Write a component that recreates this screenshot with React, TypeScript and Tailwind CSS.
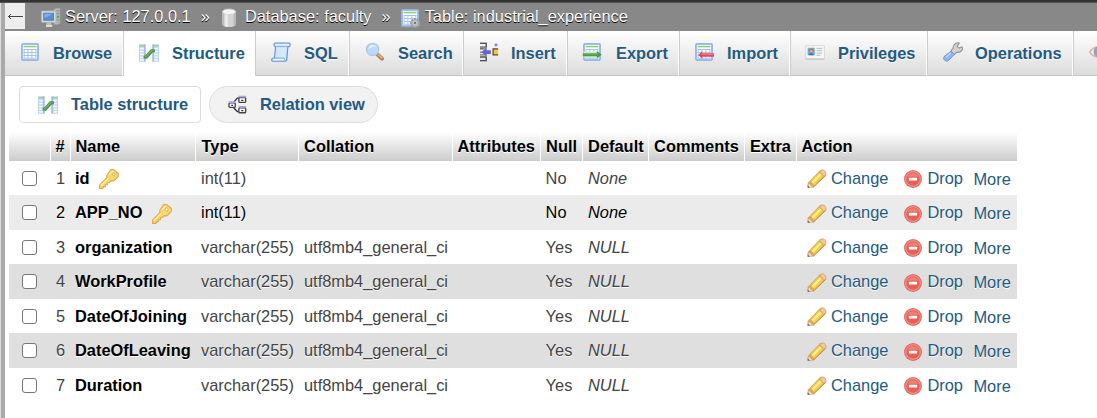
import React from "react";

type IconProps = { className?: string };

function Icon({ className = "", children }: IconProps & { children: React.ReactNode }) {
  return (
    <svg viewBox="0 0 16 16" width="20" height="20" className={`shrink-0 ${className}`} fill="none">
      {children}
    </svg>
  );
}

function Sheet() {
  return (
    <>
      <rect x="1" y="1" width="14" height="14" rx="1" fill="#a9c5ef" />
      <rect x="1.4" y="1.4" width="13.2" height="13.2" rx=".8" stroke="#8fb0e2" strokeWidth=".8" />
      <rect x="2.4" y="2.4" width="11.2" height="11.2" fill="#fff" />
      <rect x="2.8" y="3" width="10.4" height="1.3" fill="#8fcf82" />
      <path d="M2.8 6h10.4M2.8 8.4h10.4M2.8 10.8h10.4M2.8 13h10.4M3.3 6v7M6.3 6v7M9.5 6v7M12.7 6v7" stroke="#a3c3ee" strokeWidth=".8" />
    </>
  );
}

const BrowseIcon = () => <Icon><Sheet /></Icon>;

const StructureIcon = ({ className }: IconProps) => (
  <Icon className={className}>
    <rect x="0" y="1" width="5" height="14" fill="#bdd3f3" />
    <rect x="11" y="1" width="5" height="14" fill="#bdd3f3" />
    <path d="M.8 4.5h3M.8 6.8h3M.8 9.1h3M.8 11.4h3M.8 13.5h3M12.2 4.5h3M12.2 6.8h3M12.2 9.1h3M12.2 11.4h3M12.2 13.5h3" stroke="#f5f9ff" strokeWidth="1.3" />
    <path d="M.5 2.2h4M11.5 2.2h4" stroke="#a1d195" strokeWidth="1.2" />
    <path d="M4.8 1v14M11.2 1v14" stroke="#86a9dd" strokeWidth=".8" />
    <path d="M4.9 11.2h.9l4.5-5h1.2" stroke="#4f9447" strokeWidth="2.8" strokeLinejoin="round" strokeLinecap="round" />
    <path d="M4.7 10.8h.9l4.7-5h1.2" stroke="#70b467" strokeWidth="1" />
  </Icon>
);

const SqlIcon = () => (
  <Icon>
    <path d="M3.2.8h11.5c1 .3.8 2.8-.2 3l-1 .1-.8 9.5c0 1.3-.6 2-1.7 2H1.5c-1.5-.2-1.1-2.4.2-2.6h1.1l.8-9C2 3.4 2 1.1 3.2.8Z" fill="#c8e1fb" stroke="#6292d0" strokeWidth=".9" />
    <path d="M3.5 1.7h10.7v1.1H3.8zM2 13.6h8.3v1H1.8z" fill="#eef8ff" />
    <path d="m4.8 4.4-.7 8.2 7.4.2.7-8.6z" fill="#d2e8ff" />
    <path d="M3.8 3.5h9.5M2.8 12.8h7.5c.8 0 .8 1.8-.1 2" stroke="#79a3d9" strokeWidth=".7" />
  </Icon>
);

const SearchIcon = () => (
  <Icon>
    <path d="m10 10 3.7 3.4" stroke="#b98254" strokeWidth="3" strokeLinecap="round" />
    <path d="m10.4 9.9 3.3 3" stroke="#e5b779" strokeWidth="1.1" />
    <circle cx="6.1" cy="5.9" r="4.9" fill="#b9dafa" stroke="#b1c6e4" />
    <path d="M2.7 5.8c.3-2.3 2.2-3.7 4.3-3.3 1.6.3 2.5 1.3 2.5 1.3-2-.4-4.5.1-6.8 2Z" fill="#e5f5ff" />
  </Icon>
);

const InsertIcon = () => (
  <Icon>
    <path d="M0 1h5v3H0M0 4.8h5M0 12h5v3H0M0 8.1h4" stroke="#888" strokeWidth="1.2" />
    <path d="M0 1.1h5v3M0 12h5v2.8H0M0 5.6h3M0 10.3h5" stroke="#444" strokeWidth=".7" />
    <path d="m1.3 8 4-3.8v2.3h3.4v3H5.3v2.3Z" fill="#6961d4" />
    <rect x="10.5" y="5.6" width="4" height="4.5" fill="#ffc72c" />
    <path d="M14.5 5.5h-4v4.8h4" stroke="#484848" />
    <path d="m12.8.8 1.5 1.5-1.5 1.5-1.5-1.5Z" fill="#8882df" />
  </Icon>
);

const ExportIcon = () => (
  <Icon>
    <Sheet />
    <rect x="1.3" y="7.5" width="12.2" height="5" fill="#d1eccb" />
    <path d="M.7 8.9h11.2V7.2l3.9 2.9-3.9 2.9v-1.6H.7Z" fill="#4b9947" />
    <path d="M1 9.6h11.7" stroke="#82bd78" strokeWidth=".7" />
  </Icon>
);

const ImportIcon = () => (
  <Icon>
    <Sheet />
    <path d="m3.4 10.3 3.2-3v1.6H16v2.8H6.6v1.6Z" fill="#e94554" />
    <path d="M6 9.8h9.7" stroke="#ff8b8e" strokeWidth=".7" />
  </Icon>
);

const PrivilegesIcon = () => (
  <Icon>
    <rect x=".5" y="2.9" width="15" height="10.5" fill="#f7f7f5" stroke="#d9d9d8" strokeWidth=".8" />
    <path d="M.6 13.7h14.8" stroke="#b8b8b8" strokeWidth=".7" />
    <rect x="2.1" y="4.6" width="5.7" height="6" fill="#64adf1" />
    <circle cx="5" cy="6.9" r="1.7" fill="#c9762c" />
    <path d="M4.2 6.6h1.7v1.6H4.2z" fill="#f4bf85" />
    <path d="M3 10.6c.1-2.5 3.8-2.5 4 0Z" fill="#4274b6" />
    <path d="M9.2 5.1h4.5M9.2 7h4.5M9.2 8.9h4.5M9.2 10.6h3" stroke="#b5bac2" strokeWidth=".8" />
  </Icon>
);

const WrenchIcon = () => (
  <Icon>
    <path d="M6.7 8.1c-.6-1.5.2-2.2 1.3-3 .2-2.2 1.4-4.2 4-4.5l1 .3-1.7 2.5 1.5 1.5 2.4-1 .5 1.2c-.5 2.2-2.3 3.3-4.6 3.2L8.9 10Z" fill="#d0d1d3" stroke="#939599" strokeWidth=".9" />
    <path d="m6.4 7.4 2.6 2.6-4.6 4.8c-1.8 1.5-5-.9-3.6-3.1Z" fill="#91b4ef" stroke="#7198da" strokeWidth=".8" />
    <path d="m6 8.8-3.5 3.5" stroke="#cadcff" strokeWidth=".9" />
  </Icon>
);

const EyeIcon = () => (
  <Icon>
    <path d="M.7 8c3-5.3 11.6-5.3 14.6 0-3 5.3-11.6 5.3-14.6 0Z" fill="#fffaf4" stroke="#e0b992" strokeWidth="1.4" />
    <circle cx="8" cy="7.8" r="4" fill="#7ba9e5" stroke="#6b98da" strokeWidth=".7" />
    <circle cx="8" cy="7.8" r="1.5" fill="#17335f" />
  </Icon>
);

const RelationIcon = () => (
  <Icon>
    <path d="M4.5 6 7.4 2.5h1.3M4.5 10.2l2.9 3h1.3" stroke="#333" />
    <rect x=".8" y="6.3" width="5" height="3.6" rx=".7" fill="#fff" stroke="#444" strokeWidth="1.1" />
    <rect x="8.7" y="2" width="5.4" height="3.9" rx=".7" fill="#fff" stroke="#444" strokeWidth="1.1" />
    <rect x="8.7" y="10.3" width="5.4" height="3.9" rx=".7" fill="#fff" stroke="#444" strokeWidth="1.1" />
    <path d="M.6 5.6h5.4M8.5 1.3h6M8.5 9.5h6" stroke="#aaa1e6" strokeWidth="1.4" />
    <path d="M2.6 8.2h1.5M10.6 4.2h1.7M10.6 12.4h1.7" stroke="#333" strokeWidth="1" />
  </Icon>
);

const ServerIcon = () => (
  <Icon>
    <path d="M10 1.2 12 0h3.5v12.4l-2 1H10Z" fill="#b3b6b4" stroke="#8b8d8c" strokeWidth=".5" />
    <path d="M12.3 2.3h2.5M12.3 4.5h2.5M12.3 9.5h2.5" stroke="#858886" strokeWidth=".7" />
    <path d="M12.7 7h1.8" stroke="#2ab832" strokeWidth="1.5" />
    <rect x=".4" y="2.4" width="11.5" height="9" rx=".7" fill="#d8dbdb" stroke="#b2b5b7" strokeWidth=".7" />
    <rect x="2.2" y="4.1" width="7.9" height="5.7" fill="#5b8dd2" stroke="#4675b8" strokeWidth=".6" />
    <path d="M2.8 4.6h6.7L2.8 8Z" fill="#7dafea" />
    <path d="M4.6 11.5h3.2l.7 2H4Z" fill="#bdbfc0" />
    <path d="M4 14.4h5" stroke="#e0e0e0" strokeWidth="1.5" />
  </Icon>
);

const DatabaseIcon = () => (
  <Icon>
    <path d="M2.7 3v10c.2 3 10.4 3 10.6 0V3Z" fill="#d4d4d4" />
    <path d="M4 4v10c-.7-.2-1.2-.6-1.3-1V3ZM11.5 4v10.2c1-.3 1.7-.7 1.8-1.2V3Z" fill="#bcbcbc" />
    <path d="M5 4h2v11H5Z" fill="#eee" />
    <ellipse cx="8" cy="3" rx="5.3" ry="2.3" fill="#f4f4f4" stroke="#c6c6c6" strokeWidth=".5" />
  </Icon>
);

const TableIcon = () => (
  <Icon>
    <Sheet />
    <circle cx="12" cy="12" r="3.2" fill="#c5c7ca" stroke="#999b9e" strokeWidth="1.7" strokeDasharray="1.5 .8" />
    <circle cx="12" cy="12" r="2.5" fill="#c8cacc" stroke="#989a9d" strokeWidth=".5" />
    <circle cx="12" cy="12" r="1" fill="#777" />
  </Icon>
);

const KeyIcon = ({ className }: IconProps) => (
  <Icon className={className}>
    <path d="M9.1.9c.8-.7 2-.7 2.9-.2l3.1 2.5c.9.8.9 2 .2 2.9l-3 3c-.7.7-1.7.6-2.6.2L8 11H6.7v1.6H5.1v1.5H3.7L3 15.5H.5v-2.8l6-5.9c-.4-.8-.4-1.8.3-2.6Z" fill="#f8d966" stroke="#dba85a" strokeWidth=".9" />
    <path d="m8 4.3 2.5-2.5 1 .2M1.5 13.2l5.8-5.6" stroke="#fff1aa" strokeWidth=".9" />
    <circle cx="11.7" cy="4.3" r="1.2" fill="#fff" stroke="#d8a64d" strokeWidth=".7" />
  </Icon>
);

const PencilIcon = () => (
  <Icon>
    <path d="m.5 11.2 9.6-10c1.4-1.2 3.3-.9 4.5.3s1.3 2.9.2 4.1L5 14.8l-4.5.2Z" fill="#dda85f" />
    <path d="m1.5 11.5 2.6 2.6-3.5.8Z" fill="#eadbc5" />
    <path d="m3 9.5 6.7-6.8L13 6l-7 7.3Z" fill="#f2cf48" />
    <path d="M4.4 11 11 4.2" stroke="#ffef91" strokeWidth="1.9" />
    <path d="m10.6 2.2 1.3-1c1.8-.5 3.6 1.4 2.7 3.1l-1 1.2Z" fill="#f1c9a9" />
    <path d="m.5 13 2 1.9-2 .1Z" fill="#6b6250" />
    <path d="m1 11 .3.2M4.8 14.7l1-.9 9-8.6" stroke="#c08b48" strokeWidth=".8" />
  </Icon>
);

const DropIcon = () => (
  <Icon>
    <circle cx="8" cy="8" r="7.2" fill="#dc6f69" />
    <circle cx="8" cy="8" r="5.8" fill="#ea5f55" stroke="#f3a19a" strokeWidth=".7" />
    <path d="M3.5 6.2a5 5 0 0 1 9 0Z" fill="#f18077" />
    <rect x="4.7" y="6.9" width="6.6" height="2.2" rx=".4" fill="#fff" />
  </Icon>
);

const tabs = [
  { label: "Browse", icon: <BrowseIcon />, width: "w-[118px] pl-[15px] gap-[13px]" },
  { label: "Structure", icon: <StructureIcon />, width: "w-[132px] pl-[15px] gap-[13px]", active: true },
  { label: "SQL", icon: <SqlIcon />, width: "w-[94px] pl-[15px] gap-[13px]" },
  { label: "Search", icon: <SearchIcon />, width: "w-[114px] pl-[15px] gap-[13px]" },
  { label: "Insert", icon: <InsertIcon />, width: "w-[104px] pl-[16px] gap-[11px]" },
  { label: "Export", icon: <ExportIcon />, width: "w-[112px] pl-[14px] gap-[14px]" },
  { label: "Import", icon: <ImportIcon />, width: "w-[111px] pl-[14px] gap-[13px]" },
  { label: "Privileges", icon: <PrivilegesIcon />, width: "w-[137px] pl-[14px] gap-[13px]" },
  { label: "Operations", icon: <WrenchIcon />, width: "w-[146px] pl-[15px] gap-[12px]" },
  { label: "", icon: <EyeIcon />, width: "w-[130px] pl-[15px]" },
];

const columns = [
  { label: "", width: "w-[41px]", pad: "pl-[5px]" },
  { label: "#", width: "w-[20px]", pad: "pl-[5px]" },
  { label: "Name", width: "w-[125px]", pad: "pl-[5px]" },
  { label: "Type", width: "w-[103px]", pad: "pl-[6px]" },
  { label: "Collation", width: "w-[154px]", pad: "pl-[5.6px]" },
  { label: "Attributes", width: "w-[88px]", pad: "pl-[5px]" },
  { label: "Null", width: "w-[42px]", pad: "pl-[5.6px]" },
  { label: "Default", width: "w-[66px]", pad: "pl-[5.6px]" },
  { label: "Comments", width: "w-[96px]", pad: "pl-[5.6px]" },
  { label: "Extra", width: "w-[52px]", pad: "pl-[5.4px]" },
  { label: "Action", width: "w-[221px]", pad: "pl-[5px]" },
];

const rows = [
  { name: "id", type: "int(11)", collation: "", nullable: "No", def: "None", primary: true, style: "" },
  { name: "APP_NO", type: "int(11)", collation: "", nullable: "No", def: "None", primary: true, style: "bg-[#ebebeb] text-black" },
  { name: "organization", type: "varchar(255)", collation: "utf8mb4_general_ci", nullable: "Yes", def: "NULL", style: "" },
  { name: "WorkProfile", type: "varchar(255)", collation: "utf8mb4_general_ci", nullable: "Yes", def: "NULL", style: "bg-[#dfdfdf]" },
  { name: "DateOfJoining", type: "varchar(255)", collation: "utf8mb4_general_ci", nullable: "Yes", def: "NULL", style: "" },
  { name: "DateOfLeaving", type: "varchar(255)", collation: "utf8mb4_general_ci", nullable: "Yes", def: "NULL", style: "bg-[#dfdfdf]" },
  { name: "Duration", type: "varchar(255)", collation: "utf8mb4_general_ci", nullable: "Yes", def: "NULL", style: "" },
];

function Breadcrumbs() {
  return (
    <header className="flex h-7 bg-[#888] text-white [text-shadow:0_1px_0_#000]">
      <div className="flex h-[26px] w-5 shrink-0 items-center justify-center bg-[#eee]">
        <svg width="16" height="8" viewBox="0 0 16 8" fill="none" stroke="#444" strokeWidth="1">
          <path d="M1.5 4.5H16M4 2 1.5 4.5 4 7" />
        </svg>
      </div>
      <nav className="flex h-7 items-center whitespace-nowrap pl-4 [&>span]:-mt-0.5 [&>svg]:mt-0.5">
        <ServerIcon />
        <span className="ml-1">Server: 127.0.0.1</span>
        <span className="ml-[10px] mr-[9px]">»</span>
        <DatabaseIcon />
        <span className="ml-[6px]">Database: faculty</span>
        <span className="ml-[10px] mr-[9px]">»</span>
        <TableIcon />
        <span className="ml-[5px]">Table: industrial_experience</span>
      </nav>
    </header>
  );
}

function Tabs() {
  return (
    <nav className="flex h-[45px] overflow-hidden font-bold text-[#235a81] [text-shadow:0_1px_0_#fff]">
      {tabs.map((tab, i) => (
        <a
          key={i}
          className={`flex shrink-0 items-center border-r border-r-white ${i === 0 ? "" : "border-l border-l-[#ccc]"} ${tab.width} ${
            tab.active ? "bg-white" : "border-b border-b-[#c4c4c4] bg-linear-to-b from-white to-[#dcdcdc]"
          }`}
        >
          <span className="-mt-0.5">{tab.icon}</span>
          {tab.label && <span className="-mt-px">{tab.label}</span>}
        </a>
      ))}
    </nav>
  );
}

function StructureTable() {
  return (
    <table className="ml-1 mt-[9px] w-[1008px] table-fixed border-collapse text-left text-[#444]">
      <colgroup>
        {columns.map((c, i) => <col key={i} className={c.width} />)}
      </colgroup>
      <thead>
        <tr className="h-[29px] bg-linear-to-b from-white to-[#ccc] text-black [text-shadow:0_1px_0_#fff]">
          {columns.map((c, i) => (
            <th key={i} className={`whitespace-nowrap p-0 pb-0.5 font-bold ${c.pad} ${i < 10 ? "border-r border-white" : ""}`}>
              {c.label}
            </th>
          ))}
        </tr>
      </thead>
      <tbody>
        {rows.map((r, i) => {
          const even = i % 2 === 1;
          const cell = even ? "p-0 pb-px" : "p-0";
          const drop = even ? "mt-[3px]" : "mt-0.5";
          return (
            <tr key={r.name} className={`whitespace-nowrap [text-shadow:0_1px_0_#fff] ${even ? "h-[35px]" : "h-[34px]"} ${r.style}`}>
              <td className={`${cell} pl-[13px]`}>
                <input type="checkbox" aria-label={r.name} className="block size-[15px] appearance-none rounded-[3px] border border-[#767676] bg-white" />
              </td>
              <td className={`${cell} pr-[5px] text-right`}>{i + 1}</td>
              <td className={`${cell} pl-[5px] font-bold text-black`}>
                <div className="flex h-5 items-center">
                  {r.name}
                  {r.primary && <KeyIcon className={`ml-[9.5px] ${drop}`} />}
                </div>
              </td>
              <td className={`${cell} pl-[6px]`}>{r.type}</td>
              <td className={`${cell} pl-[6px]`}>{r.collation}</td>
              <td className={cell} />
              <td className={`${cell} pl-[5.6px]`}>{r.nullable}</td>
              <td className={`${cell} pl-[6px] italic`}>{r.def}</td>
              <td className={cell} />
              <td className={cell} />
              <td className={`${cell} pl-[11px] text-[#235a81]`}>
                <div className="flex h-5 items-center">
                  <span className={drop}><PencilIcon /></span>
                  <span className="ml-1">Change</span>
                  <span className={`ml-[15px] ${drop}`}><DropIcon /></span>
                  <span className="ml-1">Drop</span>
                  <span className="ml-[10.5px] mt-0.5">More</span>
                </div>
              </td>
            </tr>
          );
        })}
      </tbody>
    </table>
  );
}

export default function App() {
  return (
    <div className="flex h-[418px] w-[1097px] flex-col overflow-hidden bg-white font-['Liberation_Sans',Arial,sans-serif] text-[16.4px] leading-5">
      <div className="h-[3px] shrink-0 border-b border-[#555] bg-[#333]" />
      <div className="flex min-h-0 flex-1">
        <div className="w-[5px] shrink-0 border-l border-[#ddd] bg-[#aaa]" />
        <main className="min-w-0 flex-1">
          <Breadcrumbs />
          <Tabs />
          <div className="flex gap-2 pl-3.5 pt-2.5 font-bold text-[#235a81]">
            <a className="flex h-[37px] w-[182px] items-center gap-[13px] rounded border border-[#ddd] bg-white pl-[18px]">
              <StructureIcon />
              <span className="-mt-0.5">Table structure</span>
            </a>
            <a className="flex h-[37px] w-[169px] items-center gap-3 rounded-full border border-[#ddd] bg-[#f2f2f2] pl-[18px]">
              <RelationIcon />
              <span className="-mt-0.5">Relation view</span>
            </a>
          </div>
          <StructureTable />
        </main>
      </div>
    </div>
  );
}
